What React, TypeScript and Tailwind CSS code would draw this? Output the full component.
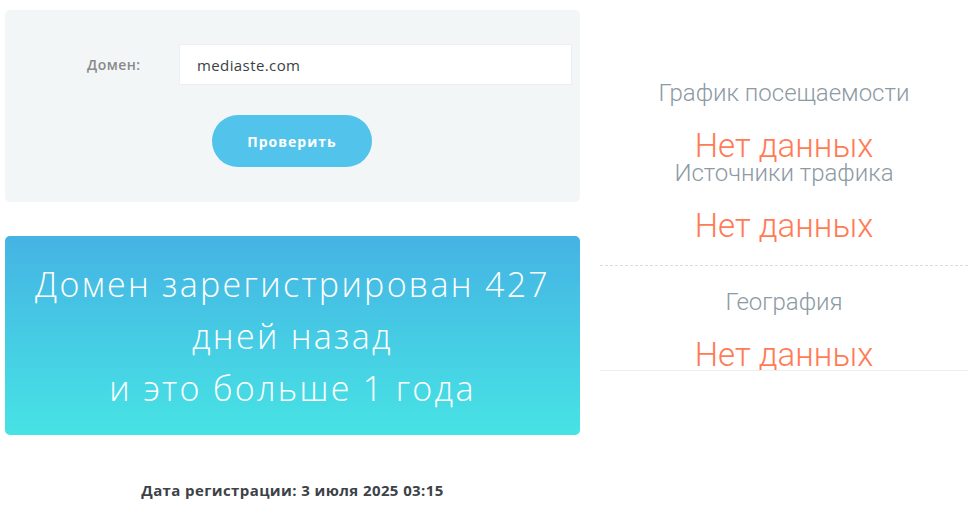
import React from "react";

const sans = { fontFamily: "'Open Sans', 'Noto Sans', sans-serif" };

function Stat({ title, className = "" }: { title: string; className?: string }) {
  return (
    <div className={`flex flex-col items-center ${className}`}>
      <h3 className="text-[24px] leading-[24px] font-light text-[#8c9aa3]">{title}</h3>
      <p className="mt-[26px] text-[33px] leading-[29px] font-light text-[#ff7b55]">Нет данных</p>
    </div>
  );
}

export default function App() {
  return (
    <div className="w-[974px] h-[513px] bg-white flex" style={sans}>
      {/* Left column: form, age card, registration date */}
      <div className="ml-[5px] mt-[10px] w-[575px] flex flex-col">
        <div className="h-[192px] bg-[#f3f6f7] rounded-[5px] flex flex-col">
          <div className="mt-[34px] flex items-center">
            <label className="ml-[82px] w-[92px] text-[14px] tracking-[0.5px] font-semibold text-[#8a8a8a]">Домен:</label>
            <input
              readOnly
              value="mediaste.com"
              className="w-[393px] h-[41px] bg-white border border-[#eceff1] px-[17px] text-[15px] tracking-[0.4px] text-[#3a3f45] outline-none"
            />
          </div>
          <button className="mt-[30px] ml-[207px] w-[160px] h-[52px] rounded-full bg-[#52c3ea] text-white text-[14px] tracking-[1px] font-bold">
            Проверить
          </button>
        </div>

        <div className="mt-[34px] h-[199px] rounded-[5px] bg-gradient-to-b from-[#45b3e3] to-[#47e3e4] flex items-center justify-center">
          <p className="text-center text-white text-[34px] leading-[52px] font-light tracking-[2.3px]">
            Домен зарегистрирован 427
            <br />
            дней назад
            <br />
            и это больше 1 года
          </p>
        </div>

        <p className="mt-[44px] text-center text-[15px] tracking-[0.4px] font-bold text-[#3d4247]">
          Дата регистрации: 3 июля 2025 03:15
        </p>
      </div>

      {/* Right column: traffic stats */}
      <div className="ml-[20px] w-[368px] flex flex-col" style={{ fontFamily: "Roboto, sans-serif" }}>
        <Stat title="График посещаемости" className="mt-[81px]" />
        <Stat title="Источники трафика" className="mt-[1px]" />
        <div className="mt-[25px] border-t border-dashed border-[#d3e0e4]" />
        <Stat title="География" className="mt-[24px]" />
        <div className="mt-[1px] border-t border-[#eceef0]" />
      </div>
    </div>
  );
}
